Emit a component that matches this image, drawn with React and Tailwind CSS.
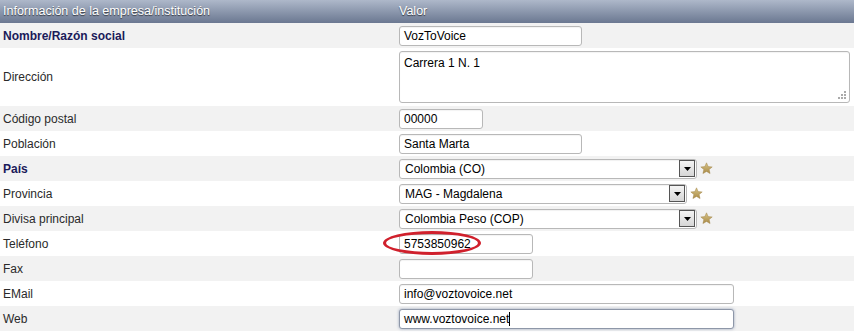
import React from "react";

const F = { fontFamily: '"Liberation Sans", Arial, sans-serif' };

function Star() {
  return (
    <svg width="13" height="13" viewBox="0 0 24 24" className="shrink-0">
      <defs>
        <linearGradient id="sg" x1="0" y1="0" x2="0" y2="1">
          <stop offset="0" stopColor="#d8c58a" />
          <stop offset="1" stopColor="#a98a45" />
        </linearGradient>
      </defs>
      <path
        d="M12 1.5l3.1 7 7.4.6-5.6 4.9 1.7 7.4L12 17.5l-6.6 3.9 1.7-7.4L1.5 9.1l7.4-.6z"
        fill="url(#sg)"
        stroke="#9a7d3c"
        strokeWidth="0.8"
      />
    </svg>
  );
}

function Select({ value, w }) {
  return (
    <div className="flex items-center gap-[3px]">
      <div
        className={`h-[20px] ${w} rounded-[3px] border border-[#b8b8b8] bg-white flex items-center justify-between pl-[5px] pr-[1px] text-[12px] text-black shadow-[inset_0_1px_1px_rgba(0,0,0,0.06)]`}
      >
        <span>{value}</span>
        <div className="w-[16px] h-[17px] border border-[#555] bg-gradient-to-b from-[#f4f4f4] to-[#d6d6d6] flex items-center justify-center">
          <svg width="7" height="4" viewBox="0 0 7 4">
            <path d="M0 0h7L3.5 4z" fill="#000" />
          </svg>
        </div>
      </div>
      <Star />
    </div>
  );
}

function Input({ value, w, focus }) {
  return (
    <div
      className={`h-[20px] ${w} rounded-[3px] border ${
        focus
          ? "border-[#8e97a8] shadow-[0_0_3px_rgba(90,110,150,0.6)]"
          : "border-[#b8b8b8] shadow-[inset_0_1px_1px_rgba(0,0,0,0.05)]"
      } bg-white flex items-center pl-[4px] text-[12px] text-black`}
    >
      <span>{value}</span>
      {focus && <span className="inline-block w-[1px] h-[14px] bg-black" />}
    </div>
  );
}

function Row({ label, bold, gray, h = "h-[25px]", children, top }) {
  return (
    <div className={`flex ${h} ${gray ? "bg-[#f2f2f2]" : "bg-white"}`}>
      <div
        className={`w-[399px] shrink-0 pl-[3px] flex items-center text-[12px] ${
          bold ? "font-bold text-[#1b1b5a]" : "text-[#2a2a2a]"
        }`}
      >
        {label}
      </div>
      <div className={`flex ${top ? "items-start pt-[3px]" : "items-center"} relative`}>
        {children}
      </div>
    </div>
  );
}

export default function App() {
  return (
    <div className="w-[854px] h-[334px] bg-white overflow-hidden" style={F}>
      <div className="flex h-[23px] bg-gradient-to-b from-[#aeb8ca] to-[#6b7891] text-white text-[12.5px] items-center [text-shadow:0_1px_1px_rgba(0,0,0,0.6)]">
        <div className="w-[399px] pl-[3px]">Información de la empresa/institución</div>
        <div>Valor</div>
      </div>
      <Row label="Nombre/Razón social" bold gray>
        <Input value="VozToVoice" w="w-[183px]" />
      </Row>
      <Row label="Dirección" h="h-[58px]" top>
        <div className="relative w-[451px] h-[52px] rounded-[3px] border border-[#b8b8b8] bg-white pl-[4px] pt-[2px] text-[12px] text-black shadow-[inset_0_1px_1px_rgba(0,0,0,0.05)]">
          Carrera 1 N. 1
          <svg className="absolute right-[3px] bottom-[3px]" width="9" height="9" viewBox="0 0 9 9">
            <rect x="7" y="1" width="2" height="2" fill="#aaa" />
            <rect x="4" y="4" width="2" height="2" fill="#aaa" />
            <rect x="7" y="4" width="2" height="2" fill="#aaa" />
            <rect x="1" y="7" width="2" height="2" fill="#aaa" />
            <rect x="4" y="7" width="2" height="2" fill="#aaa" />
            <rect x="7" y="7" width="2" height="2" fill="#aaa" />
          </svg>
        </div>
      </Row>
      <Row label="Código postal" gray>
        <Input value="00000" w="w-[84px]" />
      </Row>
      <Row label="Población">
        <Input value="Santa Marta" w="w-[183px]" />
      </Row>
      <Row label="País" bold gray>
        <Select value="Colombia (CO)" w="w-[298px]" />
      </Row>
      <Row label="Provincia">
        <Select value="MAG - Magdalena" w="w-[288px]" />
      </Row>
      <Row label="Divisa principal" gray>
        <Select value="Colombia Peso (COP)" w="w-[298px]" />
      </Row>
      <Row label="Teléfono">
        <Input value="5753850962" w="w-[134px]" />
        <div className="absolute left-[-16px] top-[0px] w-[98px] h-[24px] rounded-[50%] border-[3px] border-[#d0202c]" />
      </Row>
      <Row label="Fax" gray>
        <Input value="" w="w-[134px]" />
      </Row>
      <Row label="EMail">
        <Input value="info@voztovoice.net" w="w-[335px]" />
      </Row>
      <Row label="Web" gray>
        <Input value="www.voztovoice.net" w="w-[335px]" focus />
      </Row>
    </div>
  );
}
